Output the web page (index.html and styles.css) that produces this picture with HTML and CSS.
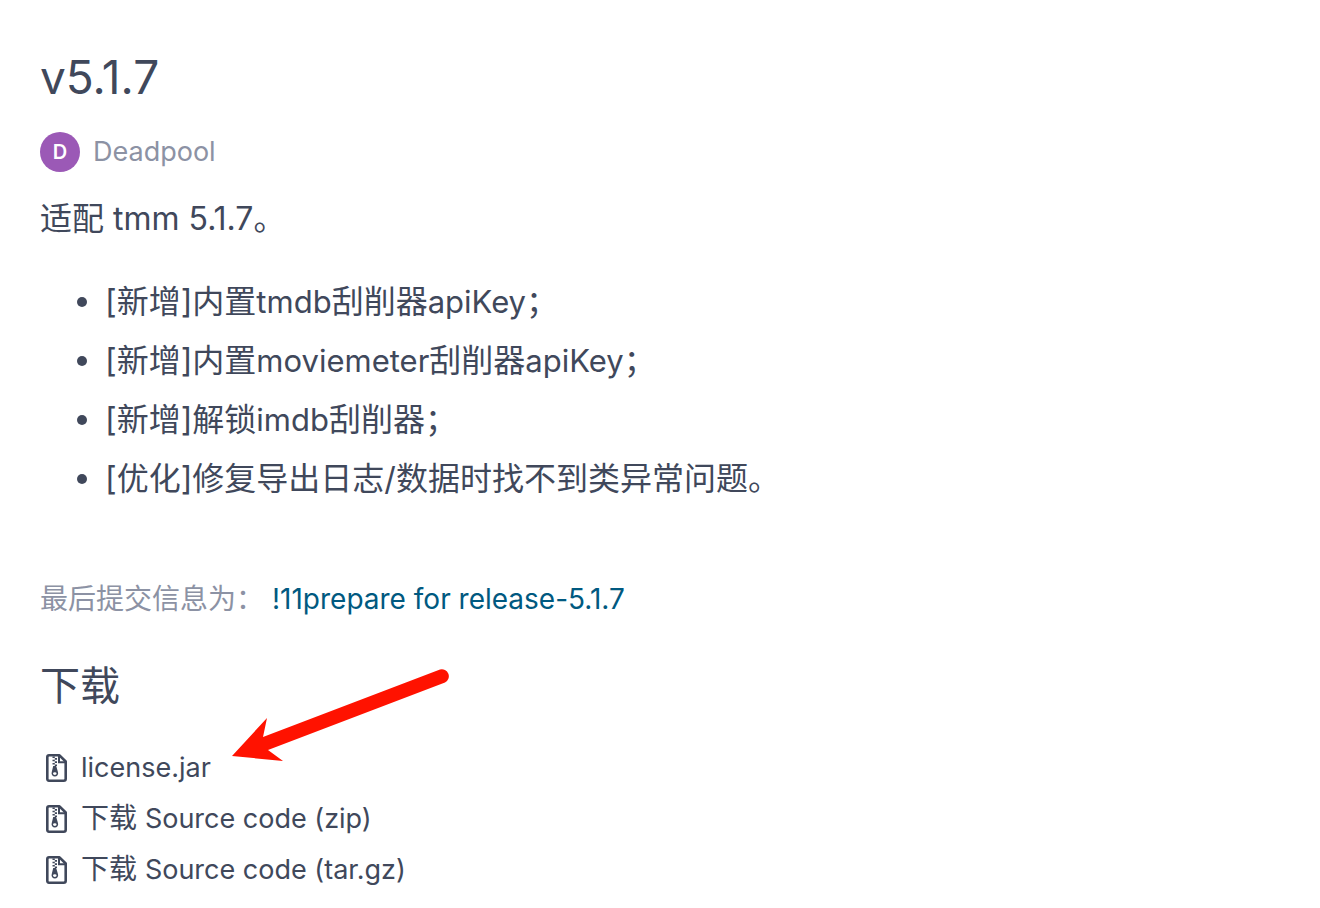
FILE: index.html
```html
<!DOCTYPE html>
<html lang="zh-CN">
<head>
<meta charset="utf-8">
<meta name="viewport" content="width=device-width, initial-scale=1">
<title>v5.1.7</title>
<link rel="stylesheet" href="styles.css">
</head>
<body>
<svg class="sprite" aria-hidden="true">
  <symbol id="file-zip" viewBox="0 0 21 28">
    <path d="M3 1.300H13.500L19.700 7.500V24.700Q19.700 26.700 17.700 26.700H3Q1.300 26.700 1.300 24.700V3Q1.300 1.300 3 1.300Z" fill="none" stroke="currentColor" stroke-width="2.600" stroke-linejoin="round"/>
    <path d="M13 1.500V8.300H19.700" fill="none" stroke="currentColor" stroke-width="2"/>
    <path d="M6.500 2.500h2.300v1.600H6.500zM8.800 4.100h2.200v1.600H8.800zM6.500 5.700h2.300v1.600H6.500zM8.800 7.300h2.200v1.600H8.800zM6.500 8.900h2.300v1.600H6.500zM8.800 10.500h2.200v1.600H8.800z" fill="currentColor"/>
    <path fill-rule="evenodd" d="M7.200 12.100H10.200L12 18.200A3.300 3.300 0 1 1 5.700 18.200ZM8.800 18.200A1.800 1.400 0 1 0 8.800 21A1.800 1.400 0 1 0 8.800 18.200Z" fill="currentColor"/>
  </symbol>
</svg>
<main class="release">
  <h1 class="release-title">v5.1.7</h1>
  <div class="author"><span class="avatar">D</span><a class="author-name" href="#">Deadpool</a></div>
  <p class="summary">适配 tmm 5.1.7。</p>
  <ul class="changes">
    <li><span>[新增]内置<span class="latin">tmdb</span>刮削器<span class="latin">apiKey</span>；</span></li>
    <li><span>[新增]内置<span class="latin">moviemeter</span>刮削器<span class="latin">apiKey</span>；</span></li>
    <li><span>[新增]解锁<span class="latin">imdb</span>刮削器；</span></li>
    <li><span>[优化]修复导出日志/数据时找不到类异常问题。</span></li>
  </ul>
  <p class="commit"><span>最后提交信息为：</span><a class="commit-link" href="#">!11prepare for release-5.1.7</a></p>
  <section class="downloads">
    <h2 class="downloads-title">下载</h2>
    <ul class="files">
      <li><a class="file" href="#"><svg class="file-icon" aria-hidden="true"><use href="#file-zip"/></svg><span class="file-name">license.jar</span></a></li>
      <li><a class="file" href="#"><svg class="file-icon" aria-hidden="true"><use href="#file-zip"/></svg><span>下载 <span class="file-name">Source code (zip)</span></span></a></li>
      <li><a class="file" href="#"><svg class="file-icon" aria-hidden="true"><use href="#file-zip"/></svg><span>下载 <span class="file-name">Source code (tar.gz)</span></span></a></li>
    </ul>
    <svg class="arrow" viewBox="0 0 218 94" aria-hidden="true"><path d="M0 88L35 50L31 69L208 1.500A7 7 0 0 1 213 14.500L36 82L51 93Z" fill="#ff1200"/></svg>
  </section>
</main>
</body>
</html>
```

FILE: styles.css
```css
* { box-sizing: border-box; }

body {
  margin: 0;
  background: #fff;
  color: #40485b;
  font-family: Inter, "Noto Sans CJK SC", sans-serif;
  font-size: 28px;
  line-height: 42px;
}

h1, h2, p, ul { margin: 0; padding: 0; font-weight: 400; }
ul { list-style: none; }
a { color: inherit; text-decoration: none; }

.sprite { position: absolute; width: 0; height: 0; }

.latin { font-size: 31px; }

.release { padding: 41px 40px 15px; }

.release-title { font-size: 46px; line-height: 72px; }

.author {
  display: flex;
  align-items: center;
  gap: 13px;
  height: 40px;
  margin-top: 19px;
  color: #8c92a4;
}

.avatar {
  width: 40px;
  height: 40px;
  border-radius: 50%;
  background: #9b59b6;
  color: #fff;
  font-size: 20px;
  font-weight: 600;
  line-height: 40px;
  text-align: center;
}

.author-name, .file-name { font-size: 27px; }

.summary { margin-top: 23px; font-size: 32px; line-height: 48px; }

.changes {
  display: grid;
  gap: 8px;
  margin-top: 33px;
  padding-left: 37px;
  font-size: 32px;
  line-height: 51px;
}

.changes li { display: flex; align-items: center; gap: 18px; }

.changes li::before {
  content: "";
  flex: none;
  width: 10px;
  height: 10px;
  border-radius: 50%;
  background: currentColor;
}

.commit {
  display: flex;
  gap: 8px;
  margin-top: 74px;
  color: #8c92a4;
}

.commit-link { color: #005980; }

.downloads { position: relative; margin-top: 36px; }

.downloads-title { font-size: 40px; line-height: 60px; }

.files { display: grid; justify-items: start; gap: 8px; margin-top: 31px; }

.file { display: flex; align-items: center; gap: 14px; padding-left: 6px; }

.file-icon { flex: none; width: 21px; height: 28px; }

.arrow {
  position: absolute;
  top: 12px;
  left: 192px;
  width: 218px;
  height: 94px;
  pointer-events: none;
}
```
